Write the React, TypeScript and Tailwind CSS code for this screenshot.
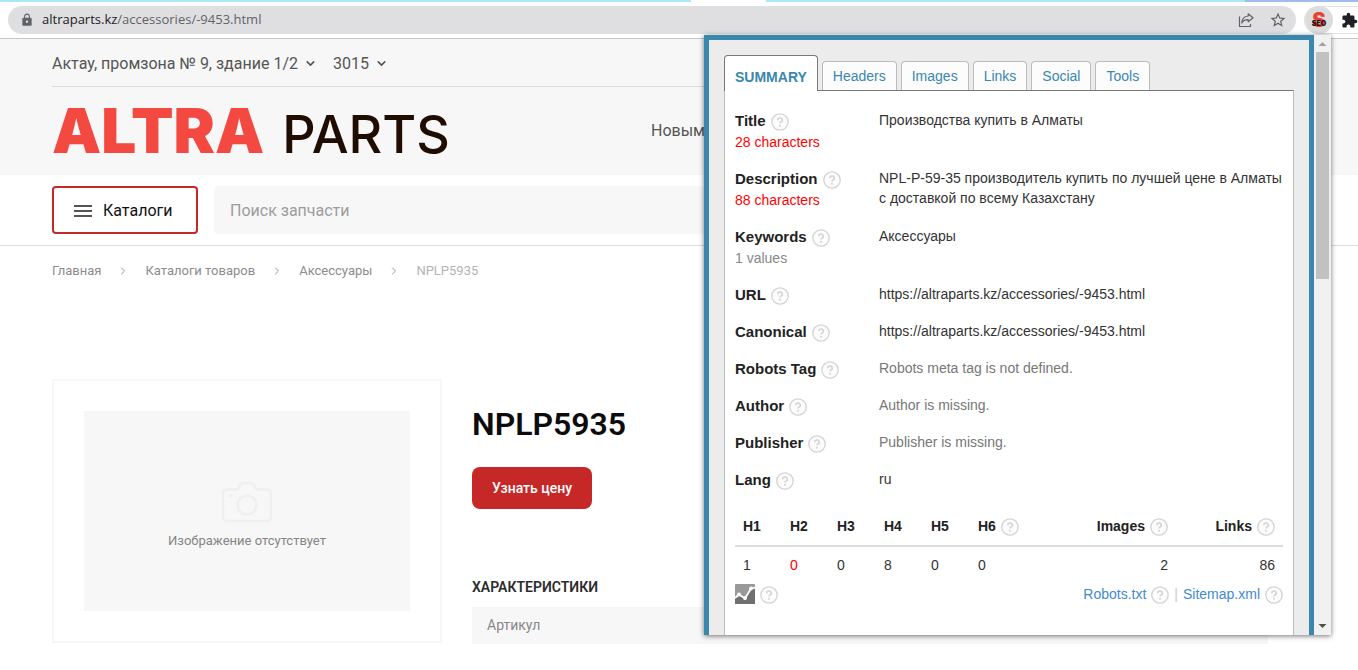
import React from 'react';
import { ChevronDown, ChevronRight } from 'lucide-react';
import { MdLock, MdExtension, MdStarBorder } from 'react-icons/md';

function Help() {
  return (
    <span className="inline-block shrink-0 pt-0.5">
      <svg width="18" height="18" viewBox="0 0 18 18" fill="none" aria-hidden="true" className="block">
        <circle cx="9" cy="9" r="8.200" fill="#fcfcfc" stroke="#d3d3d3" strokeWidth="1.3" />
        <path d="M6.7 7.2a2.3 2.1 0 1 1 3.5 1.7c-.8.5-1.2.8-1.2 1.7" stroke="#d3d3d3" strokeWidth="1.6" />
        <circle cx="9" cy="12.8" r="1" fill="#d3d3d3" />
      </svg>
    </span>
  );
}

function ShareIcon() {
  return (
    <svg width="16" height="16" viewBox="0 0 16 16" fill="none" stroke="#5f6368" strokeWidth="1.2" aria-hidden="true">
      <path d="M1.500 4.500v10h11v-2.500" />
      <path d="M10.200 1.800l4.800 4-4.800 4V7.600C7 7.500 5 8.600 3.800 11 4 7 6.300 4.400 10.200 4z" strokeLinejoin="round" />
    </svg>
  );
}

function Toolbar() {
  return (
    <div className="bg-white">
      <div className="flex h-[2px]">
        <div className="w-[691px] bg-[#ade6f5]" />
        <div className="w-[75px] bg-white" />
        <div className="w-[479px] bg-[#ade6f5]" />
        <div className="grow bg-[#9dbdec]" />
      </div>
      <div className="flex items-center gap-2 border-b border-[#c6c6c8] pt-1 pb-1 pl-2">
        <div className="flex h-7 grow items-center rounded-full bg-[#dfdfe1] pr-[9px] pl-3">
          <MdLock size={14} color="#5f6368" aria-hidden="true" />
          <span className="ml-2 grow font-['Open_Sans',sans-serif] text-[13px] text-[#5f6368]">
            <span className="text-[#202124]">altraparts.kz</span>/accessories/-9453.html
          </span>
          <button type="button" aria-label="Share" className="mr-[15px]">
            <ShareIcon />
          </button>
          <button type="button" aria-label="Bookmark">
            <MdStarBorder size={18} color="#5f6368" />
          </button>
        </div>
        <div className="flex h-7 w-[54px] shrink-0 items-center rounded-l-full border border-r-0 border-[#e4e4e6]">
          <button type="button" aria-label="SEO" className="size-7 shrink-0 rounded-full bg-[#dcdcde]">
            <svg width="28" height="28" viewBox="0 0 28 28" aria-hidden="true">
              <text x="14" y="21" textAnchor="middle" fontFamily="Inter, sans-serif" fontWeight="900" fontSize="20" fill="#ea4335">
                S
              </text>
              <text x="14" y="20" textAnchor="middle" fontFamily="Inter, sans-serif" fontWeight="900" fontSize="7" fill="#1c1010">
                SEO
              </text>
            </svg>
          </button>
          <button type="button" aria-label="Extensions" className="ml-2 shrink-0">
            <MdExtension size={17} color="#202124" />
          </button>
        </div>
      </div>
    </div>
  );
}

function SiteHeader() {
  return (
    <header>
      <div className="bg-[#f7f7f7] pr-[90px] pl-[52px]">
        <div className="flex h-12 items-center border-b border-[#dcdcdc] pt-0.5 text-base text-[#555]">
          <button type="button" className="flex items-center gap-1.5">
            Актау, промзона № 9, здание 1/2 <ChevronDown size={13} strokeWidth={3} />
          </button>
          <button type="button" className="ml-4 flex items-center gap-1.5">
            3015 <ChevronDown size={13} strokeWidth={3} />
          </button>
        </div>
        <div className="flex h-[88px] items-center">
          <a href="#" className="flex w-[599px] shrink-0 items-baseline gap-[18px] font-['Inter',sans-serif]">
            <span className="text-[62px] leading-none font-black text-[#f44941]">ALTRA</span>
            <span className="text-[52px] leading-none font-medium text-[#1e0d00]">PARTS</span>
          </a>
          <a href="#" className="text-base text-[#555]">
            Новым
          </a>
        </div>
      </div>
      <div className="flex items-center gap-4 border-b border-[#dcdcdc] pt-[11px] pr-[90px] pb-[11px] pl-[52px]">
        <button
          type="button"
          className="flex h-12 w-[146px] shrink-0 items-center gap-[11px] rounded border-2 border-[#c62828] pt-0.5 pl-5 text-base text-[#111]"
        >
          <svg width="18" height="14" viewBox="0 0 18 14" stroke="#555" strokeWidth="2" aria-hidden="true">
            <path d="M0 2h18M0 7h18M0 12h18" />
          </svg>
          Каталоги
        </button>
        <input
          type="text"
          aria-label="Поиск запчасти"
          placeholder="Поиск запчасти"
          className="h-12 grow rounded-sm bg-[#f7f7f7] px-4 text-base text-[#333] placeholder:text-[#9d9d9d]"
        />
      </div>
    </header>
  );
}

function Breadcrumbs() {
  return (
    <nav className="flex h-5 items-center text-[13px] text-[#8c8c8c]">
      {['Главная', 'Каталоги товаров', 'Аксессуары'].map((name) => (
        <React.Fragment key={name}>
          <a href="#">{name}</a>
          <ChevronRight size={12} color="#999" className="mx-4" />
        </React.Fragment>
      ))}
      <span className="text-[#b4b4b4]">NPLP5935</span>
    </nav>
  );
}

function Product() {
  return (
    <div className="mt-[98px] flex gap-[30px]">
      <div className="h-[264px] w-[390px] shrink-0 border-2 border-[#f7f7f7] px-[30px] py-[30px]">
        <div className="flex h-[200px] flex-col items-center justify-center gap-2 bg-[#f7f7f7] pt-2.5">
          <svg width="50" height="42" viewBox="0 0 50 42" fill="none" stroke="#efefef" strokeWidth="2.500" aria-hidden="true">
            <path d="M5 8.500h10c2 0 2.500-6.500 6-6.500h8c3.500 0 4 6.500 6 6.500h10a4 4 0 0 1 4 4V36a4 4 0 0 1-4 4H5a4 4 0 0 1-4-4V12.500a4 4 0 0 1 4-4z" />
            <circle cx="25" cy="24" r="9.500" />
            <circle cx="8.500" cy="15" r=".8" />
          </svg>
          <span className="text-[13px] leading-5 text-[#858585]">Изображение отсутствует</span>
        </div>
      </div>
      <div className="grow pt-[25px]">
        <h1 className="text-[32px] leading-10 font-semibold text-[#0c0c0c]">NPLP5935</h1>
        <button type="button" className="mt-[23px] h-[42px] rounded-lg bg-[#c62828] px-5 text-sm font-medium text-white">
          Узнать цену
        </button>
        <h2 className="mt-[68px] text-sm leading-5 font-semibold text-[#2c2c2c]">ХАРАКТЕРИСТИКИ</h2>
        <div className="mt-2.5 bg-[#f7f7f7] px-[15px] py-2 text-sm leading-[21px] text-[#888]">Артикул</div>
      </div>
    </div>
  );
}

type Row = { label: string; value: string; note?: string; noteRed?: boolean; muted?: boolean };

const ROWS: Row[] = [
  { label: 'Title', value: 'Производства купить в Алматы', note: '28 characters', noteRed: true },
  {
    label: 'Description',
    value: 'NPL-P-59-35 производитель купить по лучшей цене в Алматы с доставкой по всему Казахстану',
    note: '88 characters',
    noteRed: true,
  },
  { label: 'Keywords', value: 'Аксессуары', note: '1 values' },
  { label: 'URL', value: 'https://altraparts.kz/accessories/-9453.html' },
  { label: 'Canonical', value: 'https://altraparts.kz/accessories/-9453.html' },
  { label: 'Robots Tag', value: 'Robots meta tag is not defined.', muted: true },
  { label: 'Author', value: 'Author is missing.', muted: true },
  { label: 'Publisher', value: 'Publisher is missing.', muted: true },
  { label: 'Lang', value: 'ru' },
];

const TABS = ['Headers', 'Images', 'Links', 'Social', 'Tools'];

const COUNTS = [
  { name: 'H1', count: 1 },
  { name: 'H2', count: 0, red: true },
  { name: 'H3', count: 0 },
  { name: 'H4', count: 8 },
  { name: 'H5', count: 0 },
];

function Tabs() {
  return (
    <div role="tablist" className="relative z-10 -mb-px flex items-end gap-1">
      <button
        type="button"
        role="tab"
        aria-selected="true"
        className="h-9 rounded-t border border-b-0 border-[#777] bg-white px-2.5 pt-1.5 font-bold text-[#3a87ad]"
      >
        SUMMARY
      </button>
      {TABS.map((tab) => (
        <button
          key={tab}
          type="button"
          role="tab"
          aria-selected="false"
          className="mb-px h-[29px] rounded-t border border-b-0 border-[#bbb] bg-[#fcfcfc] px-2.5 text-[#3a87ad]"
        >
          {tab}
        </button>
      ))}
    </div>
  );
}

function SeoPopup() {
  return (
    <aside className="absolute top-[35px] right-[27px] flex h-[600px] w-[627px] bg-[#f1f1f1] font-['Liberation_Sans',Arial,sans-serif] text-sm text-[#333] shadow-[0_1px_5px_rgba(0,0,0,0.55)]">
      <div className="flex grow flex-col border-x-[5px] border-t-[5px] border-[#3a87ad] bg-[#ececec] px-[15px] pt-[15px]">
        <Tabs />
        <div className="grow border border-b-0 border-[#bbb] border-t-[#777] bg-white px-2.5 pt-[19px]">
          <dl>
            {ROWS.map((row) => (
              <div key={row.label} className="flex">
                <div className={row.note ? 'w-36 shrink-0 pb-[15px]' : 'w-36 shrink-0 pb-4'}>
                  <dt className="flex h-[21px] items-center gap-[5px] text-[15px] font-bold text-[#222]">
                    {row.label} <Help />
                  </dt>
                  {row.note && (
                    <dd className={row.noteRed ? 'leading-[22px] text-[#f00]' : 'leading-[22px] text-[#888]'}>{row.note}</dd>
                  )}
                </div>
                <dd className={row.muted ? 'leading-5 text-[#777]' : 'leading-5'}>{row.value}</dd>
              </div>
            ))}
          </dl>
          <table className="w-full table-fixed">
            <thead>
              <tr className="h-10 border-b-2 border-[#ddd] text-left text-[#222]">
                {COUNTS.map((c) => (
                  <th key={c.name} className="w-[47px] pl-2">
                    {c.name}
                  </th>
                ))}
                <th className="pl-2">
                  <span className="flex items-center gap-[5px]">
                    H6 <Help />
                  </span>
                </th>
                <th className="w-[120px] pr-2">
                  <span className="flex items-center justify-end gap-[5px]">
                    Images <Help />
                  </span>
                </th>
                <th className="w-[107px] pr-2">
                  <span className="flex items-center justify-end gap-[5px]">
                    Links <Help />
                  </span>
                </th>
              </tr>
            </thead>
            <tbody>
              <tr className="h-9">
                {COUNTS.map((c) => (
                  <td key={c.name} className={c.red ? 'pl-2 text-[#f00]' : 'pl-2'}>
                    {c.count}
                  </td>
                ))}
                <td className="pl-2">0</td>
                <td className="pr-2 text-right">2</td>
                <td className="pr-2 text-right">86</td>
              </tr>
            </tbody>
          </table>
          <div className="flex h-6 items-center justify-between">
            <div className="flex items-center gap-[5px]">
              <svg width="20" height="20" viewBox="0 0 20 20" aria-hidden="true">
                <rect width="20" height="20" rx="1" fill="#999" />
                <path d="M0 14L4 10.500l6 4 6-10 4 1V20H0z" fill="#6f6f6f" />
                <path d="M0 14l4-3.500 6 4 6-10 4-1" fill="none" stroke="#fff" strokeWidth="1.800" />
                <circle cx="4" cy="10.500" r="2" fill="#fff" />
                <circle cx="10" cy="14" r="2" fill="#fff" />
                <circle cx="16" cy="4.500" r="2" fill="#fff" />
              </svg>
              <Help />
            </div>
            <div className="flex items-center gap-[5px] text-[#428bca]">
              <a href="#">Robots.txt</a>
              <Help />
              <span className="text-[#ccc]">|</span>
              <a href="#">Sitemap.xml</a>
              <Help />
            </div>
          </div>
        </div>
      </div>
      <div className="flex w-[17px] shrink-0 flex-col items-center">
        <svg width="17" height="17" viewBox="0 0 17 17" aria-hidden="true">
          <path d="M4.500 11h8l-4-4z" fill="#a3a3a3" />
        </svg>
        <div className="h-[227px] w-[13px] bg-[#c1c1c1]" />
        <svg width="17" height="17" viewBox="0 0 17 17" className="mt-auto" aria-hidden="true">
          <path d="M4.500 6h8l-4 4z" fill="#505050" />
        </svg>
      </div>
    </aside>
  );
}

export default function App() {
  return (
    <div className="relative min-h-screen bg-white font-['Roboto',sans-serif]">
      <Toolbar />
      <SiteHeader />
      <main className="pt-[15px] pr-[90px] pl-[52px]">
        <Breadcrumbs />
        <Product />
      </main>
      <SeoPopup />
    </div>
  );
}
